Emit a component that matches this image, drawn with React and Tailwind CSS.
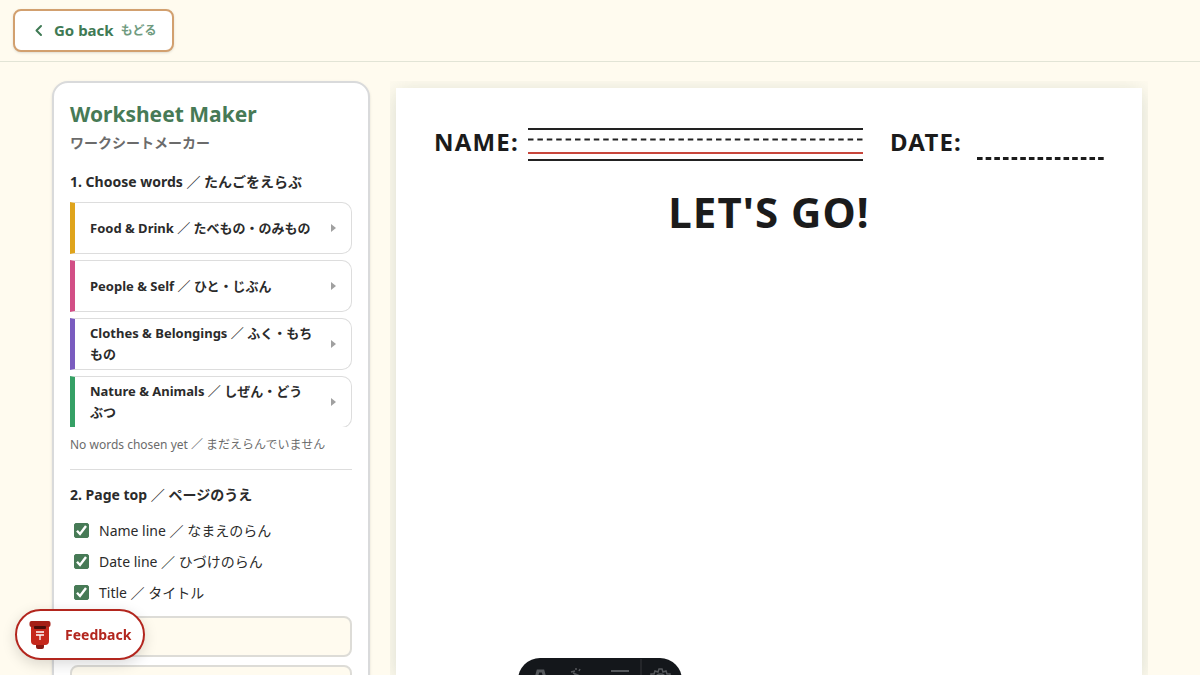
import React, { useState } from "react";

const categories = [
  { id: "food", label: "Food & Drink ／ たべもの・のみもの", color: "border-l-[#dfa41c]" },
  { id: "people", label: "People & Self ／ ひと・じぶん", color: "border-l-[#d24f86]" },
  { id: "clothes", label: "Clothes & Belongings ／ ふく・もちもの", color: "border-l-[#7a5cbf]" },
  { id: "nature", label: "Nature & Animals ／ しぜん・どうぶつ", color: "border-l-[#35a065]" },
];

const pageTopOptions = [
  { id: "name", label: "Name line ／ なまえのらん" },
  { id: "date", label: "Date line ／ ひづけのらん" },
  { id: "title", label: "Title ／ タイトル" },
];

function Header() {
  return (
    <header className="border-b border-[#e2e4d6] px-[13px] py-[9px]">
      <button
        type="button"
        className="flex h-[43px] items-center gap-[7px] rounded-lg border-2 border-[#d2a06f] bg-white px-4 font-bold text-[#3f7a54] shadow-sm"
      >
        <svg width="16" height="16" viewBox="0 0 16 16" fill="none" aria-hidden="true">
          <path d="M10 3 5.500 7.500l4.500 4.500" stroke="currentColor" strokeWidth="2" strokeLinecap="round" strokeLinejoin="round" />
        </svg>
        <span className="text-[15px]">Go back</span>
        <span className="text-xs text-[#709b7f]">もどる</span>
      </button>
    </header>
  );
}

function CategoryButton({ category }) {
  return (
    <button
      type="button"
      className={`flex h-[52px] w-full shrink-0 items-center justify-between rounded-r-[10px] border border-l-[5px] border-[#dddddd] bg-white px-[15px] text-left ${category.color}`}
    >
      <span className="w-[224px] text-[13px] leading-[21px] font-bold">{category.label}</span>
      <svg width="5" height="8" viewBox="0 0 5 8" fill="#a0a0a0" aria-hidden="true">
        <path d="M0 0l5 4-5 4z" />
      </svg>
    </button>
  );
}

function CheckOption({ option, checked, onChange }) {
  return (
    <label className="flex h-[31px] items-center gap-[10px] pl-1 text-sm" htmlFor={option.id}>
      <span className="grid">
        <input
          id={option.id}
          type="checkbox"
          checked={checked}
          onChange={onChange}
          className="peer col-start-1 row-start-1 size-[15px] appearance-none rounded-xs border border-[#477a56] bg-white checked:bg-[#477a56]"
        />
        <svg
          width="15"
          height="15"
          viewBox="0 0 15 15"
          fill="none"
          aria-hidden="true"
          className="pointer-events-none invisible col-start-1 row-start-1 peer-checked:visible"
        >
          <path d="M3 7.800l3 3.200 6-8" stroke="#fff" strokeWidth="2.4" />
        </svg>
      </span>
      {option.label}
    </label>
  );
}

function Sidebar() {
  const [options, setOptions] = useState({ name: true, date: true, title: true });
  const [title, setTitle] = useState("");

  return (
    <aside className="w-[318px] shrink-0 self-start rounded-2xl border-2 border-[#d9dadb] bg-white px-4 pt-4 pb-6 shadow-sm">
      <h1 className="text-[21px] leading-[30px] font-bold text-[#477a56]">Worksheet Maker</h1>
      <p className="mt-1 text-sm leading-5 font-bold text-[#6b6b6b]">ワークシートメーカー</p>

      {/* Words */}
      <h2 className="mt-[17px] text-sm leading-6 font-bold">1. Choose words ／ たんごをえらぶ</h2>
      <div className="mt-2 flex h-[225px] flex-col gap-[6px] overflow-hidden">
        {categories.map((category) => (
          <CategoryButton key={category.id} category={category} />
        ))}
      </div>
      <p className="mt-2 text-xs leading-5 text-[#6b6b6b]">No words chosen yet ／ まだえらんでいません</p>
      <hr className="mt-[14px] border-[#dddddd]" />

      {/* Page top */}
      <h2 className="mt-[13px] text-sm leading-6 font-bold">2. Page top ／ ページのうえ</h2>
      <div className="mt-2">
        {pageTopOptions.map((option) => (
          <CheckOption
            key={option.id}
            option={option}
            checked={options[option.id]}
            onChange={() => setOptions({ ...options, [option.id]: !options[option.id] })}
          />
        ))}
      </div>
      <input
        type="text"
        aria-label="Title"
        value={title}
        onChange={(e) => setTitle(e.target.value)}
        className="mt-2 h-[41px] w-full rounded-lg border-2 border-[#dddcd7] bg-[#fffbef] px-3"
      />
      <select aria-label="Layout" className="mt-2 h-[41px] w-full appearance-none rounded-lg border-2 border-[#dddcd7] bg-[#fffbef] px-3" />
    </aside>
  );
}

function WritingLines() {
  return (
    <svg className="h-[34px] min-w-0 flex-1" aria-hidden="true">
      <line x1="0" y1="2" x2="100%" y2="2" stroke="#222" strokeWidth="2" />
      <line x1="0" y1="12.5" x2="100%" y2="12.5" stroke="#222" strokeWidth="2" strokeDasharray="5.5 3.9" />
      <line x1="0" y1="26" x2="100%" y2="26" stroke="#c8463c" strokeWidth="2" />
      <line x1="0" y1="33" x2="100%" y2="33" stroke="#222" strokeWidth="2" />
    </svg>
  );
}

function Preview() {
  return (
    <section className="min-w-0 flex-1 overflow-hidden px-[6px] pt-[7px]">
      <div className="h-full bg-white px-[38px] pt-[39px] text-[#1b1b1b] shadow-[0_4px_20px_rgba(40,80,60,0.18)]">
        <div className="flex h-[34px]">
          <span className="mr-[9px] text-2xl leading-[30px] font-bold tracking-wider">NAME:</span>
          <WritingLines />
          <span className="mr-[9px] ml-[27px] w-[78px] text-2xl leading-[30px] font-bold tracking-wider">DATE:</span>
          <svg className="h-[34px] w-[127px]" aria-hidden="true">
            <line x1="0" y1="31.5" x2="127" y2="31.5" stroke="#1b1b1b" strokeWidth="3" strokeDasharray="5.6 3.05" />
          </svg>
        </div>
        <h2 className="mt-[26px] text-center text-[42px] leading-[50px] font-bold tracking-wide">LET'S GO!</h2>
      </div>
    </section>
  );
}

function FeedbackButton() {
  return (
    <button
      type="button"
      className="fixed bottom-[15px] left-[15px] flex h-[51px] items-center gap-[14px] rounded-full border-2 border-[#b3261e] bg-white px-3 font-bold text-[#b3261e] shadow-[0_4px_14px_rgba(0,0,0,0.15)]"
    >
      <svg width="22" height="28" viewBox="0 0 22 28" aria-hidden="true">
        <path d="M7 23h8v3q0 2-2 2H9q-2 0-2-2z" fill="#8c1a14" />
        <path d="M2 4h18v16q0 4-4 4H6q-4 0-4-4z" fill="#c5281c" />
        <rect x="0.5" width="21" height="6" rx="2" fill="#a51f17" />
        <rect x="5" y="5" width="12" height="3" rx="1" fill="#4a0d0a" />
        <path d="M7 11h8M7 14h8M11 14v5" stroke="#fff" strokeWidth="1.3" />
      </svg>
      <span className="text-sm">Feedback</span>
    </button>
  );
}

function Toolbar() {
  return (
    <div className="fixed -bottom-[30px] left-1/2 flex h-[47px] w-[164px] -translate-x-1/2 rounded-[22px] bg-[#14171b]">
      <svg width="164" height="47" viewBox="0 0 164 47" fill="none" stroke="#55585c" strokeWidth="2" aria-hidden="true">
        <path d="M17 24l3-11h5l3 11M19 19h7" strokeWidth="3" />
        <path d="M53 14l4-1M58 10v2M62 11l-1 2M55 15l14 6M56 15l5 9" strokeWidth="1.5" />
        <path d="M93 13h18" />
        <path d="M123 1v46" stroke="#34373b" strokeWidth="1" />
        <path d="M133 20v-4h3l1-3 3 1 1-3h3l1 3 3-1 1 3h3v4M138 20q0-4 4.500-4t4.500 4" strokeWidth="1.5" />
      </svg>
    </div>
  );
}

export default function App() {
  return (
    <div className="flex h-screen flex-col overflow-hidden bg-[#fffbef] font-['Noto_Sans','Noto_Sans_CJK_JP',sans-serif] text-[#2b2b2b]">
      <Header />
      <main className="mx-auto flex min-h-0 w-full max-w-[1136px] flex-1 gap-5 px-5 pt-[19px]">
        <Sidebar />
        <Preview />
      </main>
      <FeedbackButton />
      <Toolbar />
    </div>
  );
}
